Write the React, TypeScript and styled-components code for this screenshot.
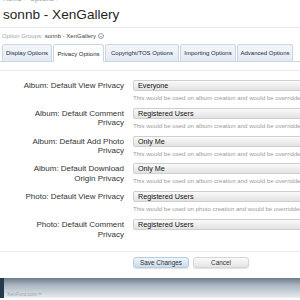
import React from "react";
import styled, { createGlobalStyle } from "styled-components";

const Global = createGlobalStyle`
  html, body { margin: 0; padding: 0; background: #ffffff; }
  body { font-family: "Liberation Sans", Arial, sans-serif; color: #222; }
`;

const Page = styled.div`
  width: 300px;
  height: 300px;
  overflow: hidden;
  background: #fff;
`;

const Breadcrumb = styled.div`
  margin-top: -5px;
  padding-left: 3px;
  font-size: 7px;
  line-height: 8px;
  color: #8a96a3;
  height: 8px;
`;

const Title = styled.h1`
  margin: 0;
  padding: 3px 3px 0;
  font-size: 13.6px;
  line-height: 18px;
  font-weight: normal;
  color: #1f1f1f;
`;

const Rule = styled.div`
  height: 1px;
  margin-top: 3px;
  background: #e6ebf0;
`;

const GroupLine = styled.div`
  padding: 4px 2px 0;
  height: 8px;
  font-size: 6px;
  line-height: 8px;
  color: #9aa3ad;
  display: flex;
  align-items: center;
  gap: 2px;
  b { font-weight: normal; color: #444; }
`;

const Chevron = styled.span`
  display: inline-flex;
  width: 6px;
  height: 6px;
  border: 1px solid #9aa3ad;
  border-radius: 50%;
  align-items: center;
  justify-content: center;
  box-sizing: border-box;
`;

const Tabs = styled.div`
  display: flex;
  height: 17px;
  padding: 3px 0 0 2px;
  border-bottom: 1px solid #c9d6e3;
  margin-top: 1px;
`;

const Tab = styled.div<{ $active?: boolean; $w: number }>`
  width: ${(p) => p.$w}px;
  box-sizing: border-box;
  margin-right: 1px;
  display: flex;
  align-items: center;
  justify-content: center;
  font-size: 6px;
  color: #222b36;
  border: 1px solid #c9d6e3;
  border-bottom: none;
  border-radius: 3px 3px 0 0;
  background: ${(p) => (p.$active ? "#ffffff" : "linear-gradient(#f3f7fb, #e2eaf2)")};
  height: ${(p) => (p.$active ? "18px" : "17px")};
  white-space: nowrap;
  flex-shrink: 0;
`;

const Form = styled.div`
  margin-top: 8px;
  border-top: 1px solid #e8eef3;
  padding-top: 9px;
`;

const Row = styled.div`
  display: grid;
  grid-template-columns: 124px 167px;
  column-gap: 9px;
  height: 27.8px;
  overflow: hidden;
`;

const Label = styled.div`
  padding-left: 22px;
  text-align: right;
  font-size: 8px;
  line-height: 9.6px;
  color: #333;
  padding-top: 1px;
`;

const Control = styled.div`
  display: flex;
  flex-direction: column;
  min-width: 0;
  overflow: hidden;
`;

const Select = styled.div`
  width: 200px;
  height: 11px;
  box-sizing: border-box;
  border: 1px solid #cfcfcf;
  border-radius: 2px;
  background: linear-gradient(#fafafa, #e2e2e2);
  font-size: 7.2px;
  line-height: 9px;
  padding-left: 4px;
  color: #111;
  white-space: nowrap;
`;

const Hint = styled.div`
  margin-top: 3px;
  font-size: 6.1px;
  line-height: 7px;
  color: #9b9b9b;
  white-space: nowrap;
`;

const Actions = styled.div`
  margin-top: 4px;
  border-top: 1px solid #e8eef3;
  padding: 5px 0 0 133px;
  display: flex;
  gap: 4px;
  height: 27px;
  box-sizing: border-box;
`;

const Button = styled.div<{ $primary?: boolean }>`
  width: 56px;
  height: 11px;
  box-sizing: border-box;
  border-radius: 3px;
  display: flex;
  align-items: center;
  justify-content: center;
  font-size: 6.4px;
  color: #333;
  border: 1px solid ${(p) => (p.$primary ? "#b8cde0" : "#d5d5d5")};
  background: ${(p) =>
    p.$primary ? "linear-gradient(#eef5fc, #c9dced)" : "linear-gradient(#fbfbfb, #e4e4e6)"};
  box-shadow: 0 1px 1px rgba(0, 0, 0, 0.12);
`;

const Footer = styled.div`
  height: 20px;
  display: flex;
  background: linear-gradient(#6b7b8a 0%, #a9b5c0 35%, #e9edf0 100%);
`;

const FooterEdge = styled.div`
  width: 4px;
  background: #24394c;
`;

const FooterText = styled.div`
  align-self: flex-end;
  padding-left: 3px;
  font-size: 5px;
  line-height: 7px;
  color: #9aa6b1;
`;

const tabs = [
  { name: "Display Options", w: 50 },
  { name: "Privacy Options", w: 51 },
  { name: "Copyright/TOS Options", w: 74 },
  { name: "Importing Options", w: 56 },
  { name: "Advanced Options", w: 56 },
];

const rows = [
  { label: "Album: Default View Privacy", value: "Everyone", hint: "This would be used on album creation and would be overridden" },
  { label: "Album: Default Comment Privacy", value: "Registered Users", hint: "This would be used on album creation and would be overridden" },
  { label: "Album: Default Add Photo Privacy", value: "Only Me", hint: "This would be used on album creation and would be overridden" },
  { label: "Album: Default Download Origin Privacy", value: "Only Me", hint: "This would be used on album creation and would be overridden" },
  { label: "Photo: Default View Privacy", value: "Registered Users", hint: "This would be used on photo creation and would be overridden" },
  { label: "Photo: Default Comment Privacy", value: "Registered Users", hint: "" },
];

export default function App() {
  return (
    <Page>
      <Global />
      <Breadcrumb>Home &gt; Options &gt;</Breadcrumb>
      <Title>sonnb - XenGallery</Title>
      <Rule />
      <GroupLine>
        Option Groups: <b>sonnb - XenGallery</b>
        <Chevron>
          <svg width="4" height="3" viewBox="0 0 4 3">
            <path d="M0.5 0.5 L2 2.2 L3.5 0.5" fill="none" stroke="#9aa3ad" strokeWidth="0.8" />
          </svg>
        </Chevron>
      </GroupLine>
      <Tabs>
        {tabs.map((t) => (
          <Tab key={t.name} $w={t.w} $active={t.name === "Privacy Options"}>
            {t.name}
          </Tab>
        ))}
      </Tabs>
      <Form>
        {rows.map((r) => (
          <Row key={r.label}>
            <Label>{r.label}</Label>
            <Control>
              <Select>{r.value}</Select>
              {r.hint && <Hint>{r.hint}</Hint>}
            </Control>
          </Row>
        ))}
      </Form>
      <Actions>
        <Button $primary>Save Changes</Button>
        <Button>Cancel</Button>
      </Actions>
      <Footer>
        <FooterEdge />
        <FooterText>XenForo.com™</FooterText>
      </Footer>
    </Page>
  );
}
